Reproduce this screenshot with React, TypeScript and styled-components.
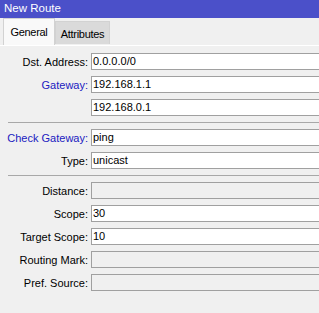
import styled, { createGlobalStyle } from 'styled-components'

const GlobalStyle = createGlobalStyle`
  html, body {
    margin: 0;
    padding: 0;
    background: #f0f0f0;
  }
  body {
    font-family: 'Liberation Sans', Arial, sans-serif;
    font-size: 11px;
  }
`

const StyledWindow = styled.div`
  width: 319px;
  height: 313px;
  overflow: hidden;
  background: #f0f0f0;
`

const StyledTitleBar = styled.div`
  height: 18px;
  line-height: 17px;
  padding-left: 4px;
  background: #4b50c9;
  color: #ffffff;
  font-size: 11.5px;
`

const StyledTabStrip = styled.div`
  display: flex;
  align-items: flex-end;
  height: 27px;
  padding-left: 3px;
`

const StyledTab = styled.div<{ $active?: boolean; $width: number }>`
  box-sizing: border-box;
  display: flex;
  align-items: center;
  justify-content: center;
  width: ${(p) => p.$width}px;
  height: ${(p) => (p.$active ? '27px' : '23px')};
  margin-bottom: ${(p) => (p.$active ? '0' : '1px')};
  padding-top: ${(p) => (p.$active ? '0' : '2px')};
  background: ${(p) => (p.$active ? '#f9f9f9' : '#dadada')};
  border: 1px solid #d2d2d2;
  border-bottom: none;
  color: #000;
  font-size: 11px;
  letter-spacing: -0.3px;
  white-space: nowrap;
`

const StyledPanel = styled.div`
  border-top: 1px solid #ffffff;
  padding-top: 7px;
`

const StyledRow = styled.div`
  display: flex;
  align-items: center;
  height: 17px;
  margin-bottom: 6px;
`

const StyledLabel = styled.div<{ $link?: boolean }>`
  box-sizing: border-box;
  width: 91px;
  padding-right: 3px;
  text-align: right;
  white-space: nowrap;
  color: ${(p) => (p.$link ? '#2020c0' : '#000000')};
`

const StyledField = styled.div<{ $disabled?: boolean }>`
  box-sizing: border-box;
  flex: 1;
  height: 17px;
  margin-right: -8px;
  padding-left: 1px;
  line-height: 15px;
  border: 1px solid #a0a0a0;
  background: ${(p) => (p.$disabled ? '#f0f0f0' : '#ffffff')};
  color: #000;
  white-space: nowrap;
`

const StyledSeparator = styled.div`
  height: 1px;
  margin: 1px 0 6px 8px;
  background: #a8a8a8;
`

type FieldDef = {
  label: string
  value?: string
  link?: boolean
  disabled?: boolean
}

const fieldsTop: FieldDef[] = [
  { label: 'Dst. Address:', value: '0.0.0.0/0' },
  { label: 'Gateway:', value: '192.168.1.1', link: true },
  { label: '', value: '192.168.0.1' },
]

const fieldsMid: FieldDef[] = [
  { label: 'Check Gateway:', value: 'ping', link: true },
  { label: 'Type:', value: 'unicast' },
]

const fieldsBottom: FieldDef[] = [
  { label: 'Distance:', disabled: true },
  { label: 'Scope:', value: '30' },
  { label: 'Target Scope:', value: '10' },
  { label: 'Routing Mark:', disabled: true },
  { label: 'Pref. Source:', disabled: true },
]

const FieldRows = ({ fields }: { fields: FieldDef[] }) => (
  <>
    {fields.map((f, i) => (
      <StyledRow key={i}>
        <StyledLabel $link={f.link}>{f.label}</StyledLabel>
        <StyledField $disabled={f.disabled}>{f.value}</StyledField>
      </StyledRow>
    ))}
  </>
)

export default function App() {
  return (
    <StyledWindow>
      <GlobalStyle />
      <StyledTitleBar>New Route</StyledTitleBar>
      <StyledTabStrip>
        <StyledTab $active $width={52}>
          General
        </StyledTab>
        <StyledTab $width={55}>Attributes</StyledTab>
      </StyledTabStrip>
      <StyledPanel>
        <FieldRows fields={fieldsTop} />
        <StyledSeparator />
        <FieldRows fields={fieldsMid} />
        <StyledSeparator />
        <FieldRows fields={fieldsBottom} />
      </StyledPanel>
    </StyledWindow>
  )
}
